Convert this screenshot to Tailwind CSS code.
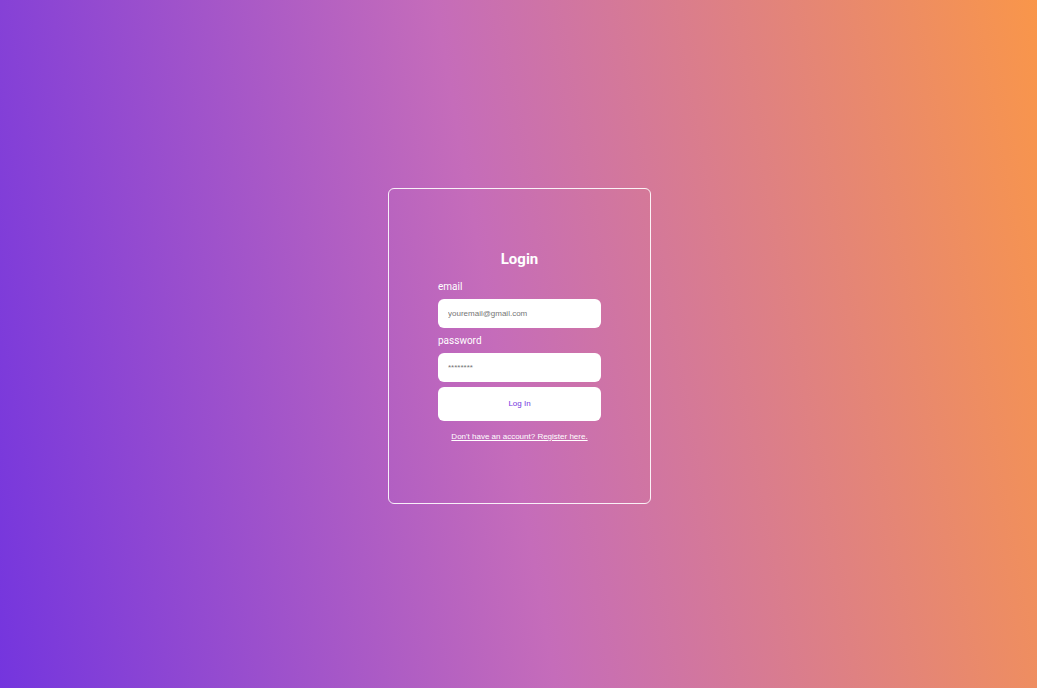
<!DOCTYPE html>
<html lang="en">
<head>
<meta charset="utf-8">
<meta name="viewport" content="width=device-width, initial-scale=1">
<title>Login</title>
<script src="https://cdn.jsdelivr.net/npm/@tailwindcss/browser@4"></script>
</head>
<body class="flex min-h-screen items-center justify-center bg-[linear-gradient(80deg,#7435de_0%,#c56cba_48%,#f9964a_100%)] pt-1 pl-0.5 font-['Liberation_Sans',Arial,sans-serif] text-white">
<main class="rounded-md border border-white/90 px-[49px] py-15">
<form class="flex w-[163px] flex-col gap-[5px]">
<h1 class="mb-[5px] text-center font-[Roboto,sans-serif] text-[15px] leading-5 font-bold">Login</h1>
<label for="email" class="font-[Roboto,sans-serif] text-[10px] leading-[15px]">email</label>
<input id="email" type="email" placeholder="youremail@gmail.com" class="h-[29px] rounded-md bg-white px-2.5 text-[8px] text-black placeholder:text-[#757575]">
<label for="password" class="font-[Roboto,sans-serif] text-[10px] leading-[15px]">password</label>
<input id="password" type="password" placeholder="********" class="h-[29px] rounded-md bg-white px-2.5 text-[8px] text-black placeholder:text-[#757575]">
<button type="submit" class="h-[34px] rounded-md bg-white text-[8px] text-[#7435de]">Log In</button>
<a href="#" class="mt-[5px] text-center text-[8px] leading-3 underline">Don't have an account? Register here.</a>
</form>
</main>
</body>
</html>
